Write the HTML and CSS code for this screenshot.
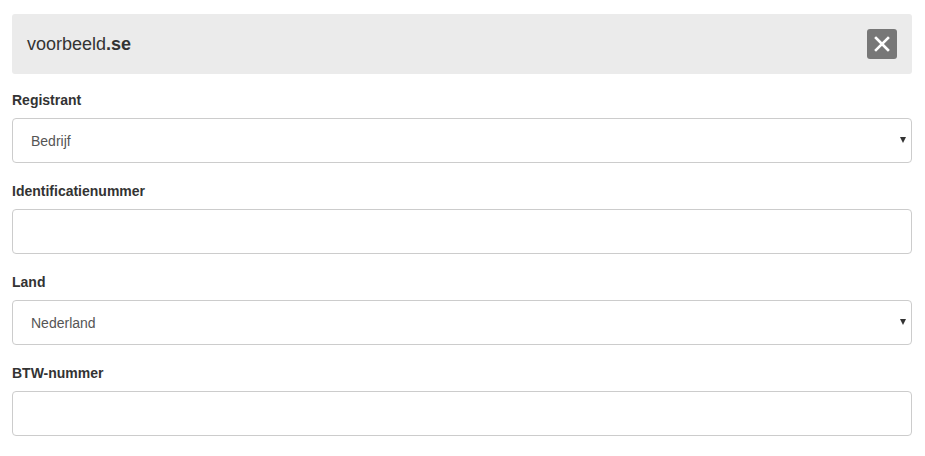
FILE: index.html
```html
<!DOCTYPE html>
<html lang="nl">
<head>
    <meta charset="UTF-8">
    <meta name="viewport" content="width=device-width, initial-scale=1.0">
    <title>voorbeeld.se</title>
    <link rel="stylesheet" href="styles.css">
</head>
<body>
    <div class="container">
        <div class="header">
            <h3>voorbeeld<b>.se</b></h3>
            <button class="close" aria-label="Sluiten">
                <svg width="16" height="16" viewBox="0 0 16 16">
                    <path d="M2 2 L14 14 M14 2 L2 14" stroke="#fff" stroke-width="2.6" stroke-linecap="square"/>
                </svg>
            </button>
        </div>
        <div class="content">
            <div class="group">
                <label for="registrant">Registrant</label>
                <div class="select">
                    <select id="registrant">
                        <option>Bedrijf</option>
                        <option>Particulier</option>
                    </select>
                </div>
            </div>
            <div class="group">
                <label for="idnr">Identificatienummer</label>
                <input type="text" id="idnr">
            </div>
            <div class="group">
                <label for="land">Land</label>
                <div class="select">
                    <select id="land">
                        <option>Nederland</option>
                        <option>Zweden</option>
                    </select>
                </div>
            </div>
            <div class="group">
                <label for="btw">BTW-nummer</label>
                <input type="text" id="btw">
            </div>
        </div>
    </div>
</body>
</html>
```

FILE: styles.css
```css
body {
    margin: 0;
    background: #fff;
    font-family: "Liberation Sans", Arial, sans-serif;
    color: #333;
}
.container {
    width: 900px;
    padding: 14px 12px;
}
.header {
    height: 60px;
    background-color: #ebebeb;
    border-radius: 3px;
    padding: 0 15px 0 15px;
    display: flex;
    align-items: center;
    justify-content: space-between;
    box-sizing: border-box;
}
.header h3 {
    margin: 0;
    font-size: 18px;
    font-weight: normal;
    color: #333;
}
.header .close {
    width: 30px;
    height: 30px;
    padding: 0;
    border: none;
    border-radius: 3px;
    background-color: #777;
    display: flex;
    align-items: center;
    justify-content: center;
    cursor: pointer;
}
.content {
    padding-top: 16px;
}
.group {
    margin-bottom: 18px;
}
.group label {
    display: block;
    font-size: 14px;
    font-weight: bold;
    line-height: 20px;
    margin-bottom: 8px;
    color: #333;
}
.group input,
.group select {
    display: block;
    width: 100%;
    height: 45px;
    box-sizing: border-box;
    border: 1px solid #ccc;
    border-radius: 4px;
    padding: 0 18px;
    font-family: inherit;
    font-size: 14px;
    color: #555;
    background-color: #fff;
    outline: none;
}
.select {
    position: relative;
}
.group select {
    appearance: none;
    -webkit-appearance: none;
}
.select::after {
    content: "";
    position: absolute;
    right: 6px;
    top: 19px;
    border-left: 3px solid transparent;
    border-right: 3px solid transparent;
    border-top: 6px solid #333;
    pointer-events: none;
}
```
